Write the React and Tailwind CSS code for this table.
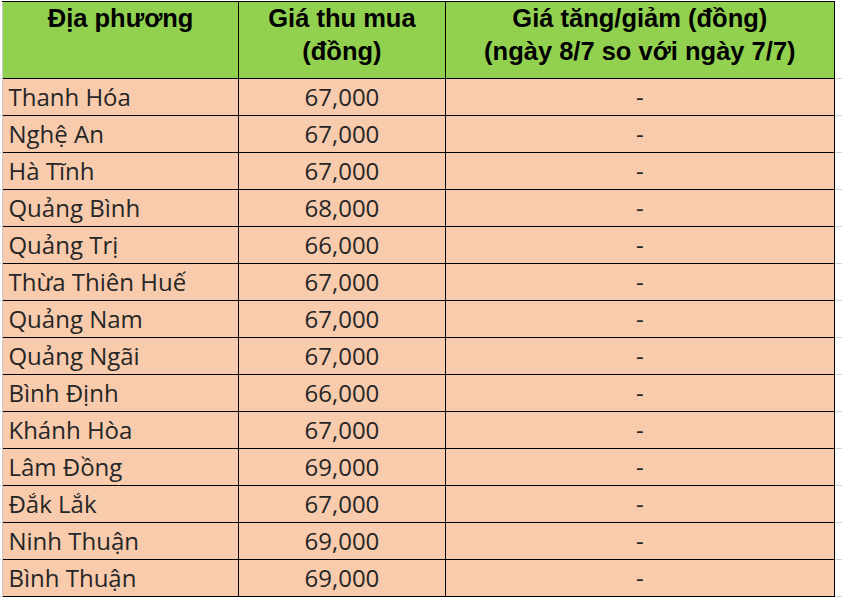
const rows = [
  ["Thanh Hóa", "67,000"],
  ["Nghệ An", "67,000"],
  ["Hà Tĩnh", "67,000"],
  ["Quảng Bình", "68,000"],
  ["Quảng Trị", "66,000"],
  ["Thừa Thiên Huế", "67,000"],
  ["Quảng Nam", "67,000"],
  ["Quảng Ngãi", "67,000"],
  ["Bình Định", "66,000"],
  ["Khánh Hòa", "67,000"],
  ["Lâm Đồng", "69,000"],
  ["Đắk Lắk", "67,000"],
  ["Ninh Thuận", "69,000"],
  ["Bình Thuận", "69,000"],
];

const head = "border border-black bg-[#92d050] align-top text-black font-bold text-[25.5px] leading-[33px] p-0 text-center";
const cell = "border border-black bg-[#f8cbad] text-[#262626] text-[24px] p-0 whitespace-nowrap";
const gutL = "border-b border-[#d4d4d4] p-0";
const gutR = "border-b border-[#d4d4d4] p-0";

const App = () => {
  return (
    <div className="w-[842px] h-[602px] bg-white overflow-hidden pt-px">
      <table className="border-collapse table-fixed" style={{ fontFamily: "'Open Sans', sans-serif" }}>
        <colgroup>
          <col className="w-[3px]" />
          <col className="w-[236px]" />
          <col className="w-[209px]" />
          <col className="w-[392px]" />
          <col className="w-[8px]" />
        </colgroup>
        <tbody>
          <tr className="h-[77px]">
            <td className={gutL}></td>
            <th className={head + " border-l-[#c8c8c8]"} style={{ fontFamily: "'Liberation Sans', Arial, sans-serif" }}>
              Địa phương
            </th>
            <th className={head} style={{ fontFamily: "'Liberation Sans', Arial, sans-serif" }}>
              Giá thu mua
              <br />
              (đồng)
            </th>
            <th className={head} style={{ fontFamily: "'Liberation Sans', Arial, sans-serif" }}>
              Giá tăng/giảm (đồng)
              <br />
              (ngày 8/7 so với ngày 7/7)
            </th>
            <td className={gutR}></td>
          </tr>
          {rows.map((r, i) => (
            <tr className="h-[37px]" key={i}>
              <td className={gutL}></td>
              <td className={cell + " pl-[5px] border-l-[#c8c8c8]"}>{r[0]}</td>
              <td className={cell + " text-center"}>{r[1]}</td>
              <td className={cell + " text-center"}>-</td>
              <td className={gutR}></td>
            </tr>
          ))}
        </tbody>
      </table>
    </div>
  );
};

export default App;
